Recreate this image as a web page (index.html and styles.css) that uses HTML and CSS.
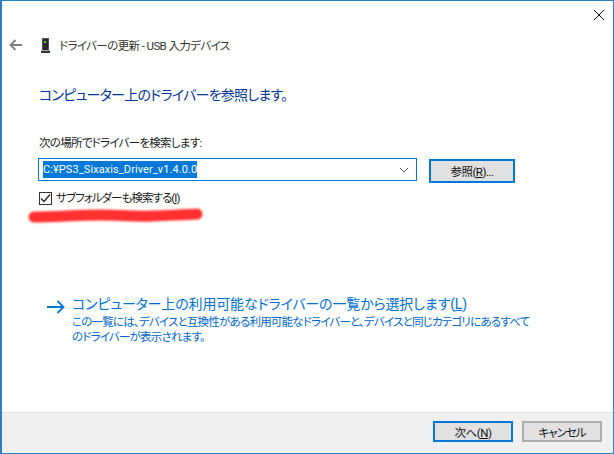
FILE: index.html
```html
<!DOCTYPE html>
<html lang="ja">
<head>
<meta charset="utf-8">
<title>ドライバーの更新</title>
<link rel="stylesheet" href="styles.css">
</head>
<body>
<div class="window">
  <div class="titlebar">
    <svg class="close" width="10" height="10" viewBox="0 0 10 10"><path d="M0 0L10 10M10 0L0 10" stroke="#111" stroke-width="1" fill="none"/></svg>
  </div>
  <div class="nav">
    <svg class="back" width="13" height="12" viewBox="0 0 13 12"><path d="M13 6H1.5M6.5 1L1.5 6l5 5" stroke="#7f7f7f" stroke-width="1.8" fill="none"/></svg>
    <svg class="device" width="9" height="15" viewBox="0 0 9 15"><rect x="1" y="0" width="7" height="12" fill="#555"/><rect x="2" y="1" width="5" height="11" fill="#2b2b2b"/><rect x="3" y="3" width="2" height="2" fill="#35e03a"/><rect x="0" y="12" width="9" height="1" fill="#aaa"/><rect x="0" y="13" width="9" height="2" fill="#333"/></svg>
    <span class="nav-title">ドライバーの更新 - USB 入力デバイス</span>
  </div>
  <div class="main">
    <h1 class="heading">コンピューター上のドライバーを参照します。</h1>
    <label class="field-label">次の場所でドライバーを検索します:</label>
    <div class="path-row">
      <div class="combo">
        <span class="selected">C:¥PS3_Sixaxis_Driver_v1.4.0.0</span>
        <svg class="chevron" width="10" height="6" viewBox="0 0 10 6"><path d="M1 1l4 4 4-4" stroke="#555" stroke-width="1" fill="none"/></svg>
      </div>
      <button class="btn btn-focus btn-browse">参照(<u>R</u>)...</button>
    </div>
    <div class="check-row">
      <span class="checkbox"><svg width="11" height="9" viewBox="0 0 11 9"><path d="M1 4.5l3 3 6-7" stroke="#222" stroke-width="1.3" fill="none"/></svg></span>
      <span class="check-label">サブフォルダーも検索する(<u>I</u>)</span>
    </div>
    <div class="link-block">
      <svg class="link-arrow" width="18" height="14" viewBox="0 0 18 14"><path d="M0 7H16.5M10.5 1l6 6-6 6" stroke="#0078d7" stroke-width="1.8" fill="none"/></svg>
      <div class="link-text">
        <div class="link-title">コンピューター上の利用可能なドライバーの一覧から選択します(<u>L</u>)</div>
        <p class="link-desc">この一覧には、デバイスと互換性がある利用可能なドライバーと、デバイスと同じカテゴリにあるすべてのドライバーが表示されます。</p>
      </div>
    </div>
  </div>
  <div class="footer">
    <button class="btn btn-focus btn-next">次へ(<u>N</u>)</button>
    <button class="btn btn-cancel">キャンセル</button>
  </div>
  <svg class="scribble" width="180" height="20" viewBox="0 0 180 20"><path d="M7 11C30 11 50 9 75 9S105 11 125 10 160 9 170 8" stroke="#ff3030" stroke-width="11" stroke-linecap="round" fill="none"/></svg>
</div>
</body>
</html>
```
FILE: styles.css
```css
* { box-sizing: border-box; }
html, body { margin: 0; height: 100%; }
body { background: #fff; font-family: Roboto, "Noto Sans CJK JP", sans-serif; font-size: 11.5px; color: #1a1a1a; font-feature-settings: "palt"; }
.window { position: relative; width: 614px; height: 454px; border: 1px solid #2f7fc8; border-width: 1px 1px 1px 2px; display: flex; flex-direction: column; background: #fff; overflow: hidden; }
.titlebar { height: 30px; flex: none; display: flex; justify-content: flex-end; padding: 9px 9px 0 0; }
.nav { height: 28px; flex: none; display: flex; align-items: center; padding-left: 7px; }
.back { margin-right: 19px; }
.device { margin-right: 9px; }
.nav-title { color: #333; letter-spacing: -0.6px; }
.main { flex: 1; padding: 0 0 0 36px; }
.heading { margin: 26px 0 0 1px; font-size: 14px; line-height: 20px; font-weight: 400; color: #003399; letter-spacing: -0.75px; }
.field-label { display: block; margin: 30px 0 0 1px; line-height: 16px; letter-spacing: -0.7px; }
.path-row { display: flex; align-items: flex-start; margin-top: 7px; }
.combo { width: 379px; height: 23px; border: 1px solid #0078d7; display: flex; align-items: center; justify-content: space-between; padding: 0 7px 0 4px; }
.selected { background: #0078d7; color: #fff; line-height: 17px; font-size: 11px; letter-spacing: 0.08px; }
.btn { font: inherit; font-feature-settings: inherit; letter-spacing: -0.5px; color: #111; background: #e1e1e1; padding: 0; margin: 0; display: block; }
.btn-focus { border: 2px solid #0078d7; }
.btn-browse { width: 86px; height: 24px; margin: 1px 0 0 12px; }
.check-row { display: flex; align-items: center; gap: 4px; margin-top: 7px; line-height: 16px; padding-left: 1px; }
.check-label { letter-spacing: -0.95px; }
.checkbox { width: 13px; height: 13px; border: 1px solid #333; display: flex; align-items: center; justify-content: center; }
.link-block { display: flex; align-items: flex-start; margin-top: 88px; padding-left: 9px; }
.link-arrow { margin-top: 6px; margin-right: 7px; flex: none; }
.link-title { font-size: 14px; line-height: 20px; color: #0070d0; letter-spacing: -0.15px; }
.link-desc { margin: 1px 0 0; width: 462px; line-height: 15px; color: #0066cc; letter-spacing: -0.78px; }
.footer { height: 41px; flex: none; background: #f0f0f0; border-top: 1px solid #dfdfdf; display: flex; justify-content: flex-end; gap: 9px; padding: 8px 11px 0 0; }
.btn-next { width: 80px; height: 21px; }
.btn-cancel { width: 80px; height: 21px; border: 2px solid #adadad; letter-spacing: -1px; }
.scribble { position: absolute; left: 25px; top: 205px; filter: blur(1px); }
```
